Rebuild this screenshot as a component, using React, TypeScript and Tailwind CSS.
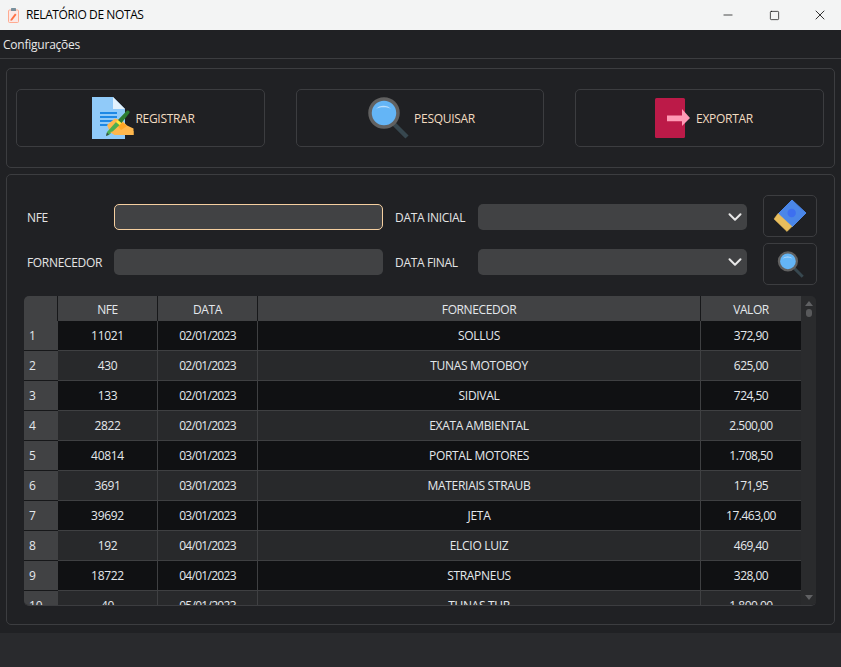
import React from 'react';
import { ChevronDown, Minus, Square, X } from 'lucide-react';

const rows = [
  ['1', '11021', '02/01/2023', 'SOLLUS', '372,90'],
  ['2', '430', '02/01/2023', 'TUNAS MOTOBOY', '625,00'],
  ['3', '133', '02/01/2023', 'SIDIVAL', '724,50'],
  ['4', '2822', '02/01/2023', 'EXATA AMBIENTAL', '2.500,00'],
  ['5', '40814', '03/01/2023', 'PORTAL MOTORES', '1.708,50'],
  ['6', '3691', '03/01/2023', 'MATERIAIS STRAUB', '171,95'],
  ['7', '39692', '03/01/2023', 'JETA', '17.463,00'],
  ['8', '192', '04/01/2023', 'ELCIO LUIZ', '469,40'],
  ['9', '18722', '04/01/2023', 'STRAPNEUS', '328,00'],
  ['10', '40', '05/01/2023', 'TUNAS TUR', '1.800,00'],
];

const TitleIcon = () => (
  <svg width="11" height="15" viewBox="0 0 11 15">
    <rect x="0.5" y="2" width="10" height="12.5" rx="1" fill="#fbe9e7" stroke="#ffab91" />
    <rect x="3" y="0" width="5" height="3" rx="0.5" fill="#78909c" />
    <path d="M2.500 11.500 L7 5.500 L8.500 6.700 L4 12.500 L2.500 12.800 Z" fill="#ff7043" />
  </svg>
);

const RegisterIcon = () => (
  <svg width="42" height="42" viewBox="0 0 42 42" className="shrink-0">
    <path d="M0 0H21L33 12V42H0Z" fill="#90caf9" />
    <path d="M21 0L33 12H21Z" fill="#e3f2fd" />
    <path d="M8 15H25V17H8ZM8 19H25V21H8ZM8 23H22V25H8ZM8 27H19V29H8Z" fill="#1e88e5" />
    <path d="M15 28L23 21.500L30 23.500L35 28.500L41.500 31.500V38H23L18 35Z" fill="#ffb74d" />
    <path d="M24 27L31 26L35 29L29 33Z" fill="#ffa726" />
    <path d="M15 35L24 25L27.500 28L17 38L14 39Z" fill="#4caf50" />
    <path d="M14 39L15 35.500L17 37.500Z" fill="#37474f" />
    <path d="M24 25L26 23L29.500 26L27.500 28Z" fill="#ffeb3b" />
    <path d="M26 23L35 13.500Q36.500 13 37.500 14.500Q38 15.500 37 16.500L29.500 26Z" fill="#2e7d32" />
    <path d="M23 38L18 35L29 33.500L41.500 34V38Z" fill="#ffb74d" />
  </svg>
);

const SearchIcon = ({ size }: { size: number }) => (
  <svg width={size} height={size} viewBox="0 0 42 42" className="shrink-0">
    <path d="M27 27L40 40" stroke="#37474f" strokeWidth="4.5" />
    <circle cx="17" cy="16" r="14" fill="#64b5f6" stroke="#616161" strokeWidth="3.5" />
    <path d="M9 12C12 7.500 21 7.500 24 12C21 9.500 12 9.500 9 12Z" fill="#bbdefb" />
  </svg>
);

const ExportIcon = () => (
  <svg width="36" height="40" viewBox="0 0 36 40" className="shrink-0">
    <rect x="0" y="0" width="30" height="40" rx="1.500" fill="#bc1a48" />
    <path d="M12 17.500H27V11L35 20L27 28V23.300H12Z" fill="#ff9ab5" />
  </svg>
);

const EraserIcon = () => (
  <svg width="34" height="34" viewBox="0 0 34 34">
    <path d="M19 1L33 14L19 28L5 15Z" fill="#4a86e8" stroke="#4a86e8" strokeLinejoin="round" />
    <path d="M5 14.500L19 27.500L14 32.500L1 20Z" fill="#e8bd5c" stroke="#e8bd5c" strokeWidth="0.5" strokeLinejoin="round" />
    <circle cx="18.700" cy="14" r="4.200" fill="#3d6ff0" />
  </svg>
);

const Cell = ({ children, className = '' }: { children: React.ReactNode; className?: string }) => (
  <div className={`flex items-center justify-center ${className}`}>{children}</div>
);

const Label = ({ children }: { children: React.ReactNode }) => (
  <span className="pt-[2px] text-[12px] tracking-[-0.33px] text-[#e4e4e4]">{children}</span>
);

const ActionButton = ({ icon, label, className }: { icon: React.ReactNode; label: string; className: string }) => (
  <button className={`flex h-[58px] items-center justify-center rounded-[5px] border border-[#3c3d40] bg-[#1f2023] text-[12px] tracking-[-0.3px] text-[#f2dcc0] ${className}`}>
    {icon}
    <span className="pt-[2px]">{label}</span>
  </button>
);

const Combo = () => (
  <div className="flex h-[26px] w-[269px] items-center justify-end rounded-[5px] bg-[#414244] pr-[1px]">
    <ChevronDown size={22} strokeWidth={2.2} className="text-[#e8e8e8]" />
  </div>
);

const IconButton = ({ children }: { children: React.ReactNode }) => (
  <button className="flex h-[42px] w-[54px] items-center justify-center rounded-[5px] border border-[#3c3d40] bg-[#1f2023]">
    {children}
  </button>
);

const cols = 'grid grid-cols-[34px_100px_100px_443px_100px]';

export default function App() {
  return (
    <div className="flex h-[667px] w-[841px] flex-col overflow-hidden bg-[#202124] font-['Open_Sans','Noto_Sans',sans-serif] text-[12px]">
      {/* title bar */}
      <div className="flex h-[30px] shrink-0 items-center bg-[#f3f4f4] pl-[8px] text-black">
        <TitleIcon />
        <span className="ml-[7px] text-[12px] tracking-[-0.4px]">RELATÓRIO DE NOTAS</span>
        <div className="-mr-[2px] ml-auto flex items-center">
          <div className="flex w-[46px] justify-center"><Minus size={14} strokeWidth={1.2} /></div>
          <div className="flex w-[46px] justify-center"><Square size={11} strokeWidth={1.5} /></div>
          <div className="flex w-[46px] justify-center"><X size={16} strokeWidth={1.2} /></div>
        </div>
      </div>

      {/* menu */}
      <div className="flex h-[29px] shrink-0 items-center border-b border-[#3c3d40] pl-[3px] pt-[2px] tracking-[-0.23px] text-[#e8e8e8]">
        Configurações
      </div>

      <div className="flex grow flex-col gap-[6px] px-[6px] pt-[9px]">
        {/* actions */}
        <div className="flex h-[100px] shrink-0 items-center gap-[31px] rounded-[5px] border border-[#3c3d40] px-[9px]">
          <ActionButton icon={<RegisterIcon />} label="REGISTRAR" className="w-[249px] gap-[1px] pl-[6px]" />
          <ActionButton icon={<SearchIcon size={42} />} label="PESQUISAR" className="w-[248px] gap-[5px] pl-[2px]" />
          <ActionButton icon={<ExportIcon />} label="EXPORTAR" className="w-[249px] gap-[5px] pl-[9px]" />
        </div>

        {/* filter and table */}
        <div className="flex h-[451px] shrink-0 flex-col rounded-[5px] border border-[#3c3d40] pl-[17px] pt-[20px]">
          <div className="flex">
            <div className="grid grid-cols-[87px_269px_12px_83px_269px] grid-rows-[26px_26px] items-center gap-y-[19px] pl-[3px] pt-[9px]">
              <Label>NFE</Label>
              <div className="h-[26px] rounded-[5px] border border-[#f5cfa0] bg-[#414244]" />
              <div />
              <Label>DATA INICIAL</Label>
              <Combo />
              <Label>FORNECEDOR</Label>
              <div className="h-[26px] rounded-[5px] bg-[#414244]" />
              <div />
              <Label>DATA FINAL</Label>
              <Combo />
            </div>
            <div className="ml-[16px] flex flex-col gap-[6px]">
              <IconButton><EraserIcon /></IconButton>
              <IconButton><SearchIcon size={27} /></IconButton>
            </div>
          </div>

          <div className="mt-[11px] flex h-[310px] w-[792px] overflow-hidden rounded-[5px] border-b border-[#3c3d40] text-[12px] text-[#e4e8ec]">
            <div className="w-[777px]">
              <div className={`${cols} h-[25px] bg-[#414244] tracking-[-0.4px]`}>
                <Cell className="border-r border-[#17181a]">{''}</Cell>
                <Cell className="border-r border-[#17181a] pt-[2px]">NFE</Cell>
                <Cell className="border-r border-[#17181a] pt-[2px]">DATA</Cell>
                <Cell className="border-r border-[#17181a] pt-[2px]">FORNECEDOR</Cell>
                <Cell className="pt-[2px]">VALOR</Cell>
              </div>
              {rows.map((r, i) => (
                <div key={r[0]} className={`${cols} h-[30px] ${i % 2 === 0 ? 'bg-[#101113]' : 'bg-[#28292b]'}`}>
                  <div className="flex items-center border-b border-[#17181a] bg-[#414244] pl-[5px] pt-[1px]">{r[0]}</div>
                  <Cell className="border-b border-r border-[#3f4042] tracking-[-0.3px]">{r[1]}</Cell>
                  <Cell className="border-b border-r border-[#3f4042] tracking-[-0.7px]">{r[2]}</Cell>
                  <Cell className="border-b border-r border-[#3f4042] tracking-[-0.3px]">{r[3]}</Cell>
                  <Cell className="border-b border-[#3f4042] tracking-[-0.5px]">{r[4]}</Cell>
                </div>
              ))}
            </div>
            <div className="flex w-[15px] flex-col items-center bg-[#2a2b2d] pt-[5px]">
              <div className="h-0 w-0 border-x-[4px] border-b-[5px] border-x-transparent border-b-[#606163]" />
              <div className="mt-[3px] h-[8px] w-[6px] rounded-[3px] bg-[#58595b]" />
              <div className="mb-[5px] mt-auto h-0 w-0 border-x-[4px] border-t-[5px] border-x-transparent border-t-[#606163]" />
            </div>
          </div>
        </div>
      </div>

      {/* status bar */}
      <div className="h-[34px] shrink-0 bg-[#292a2d]" />
    </div>
  );
}
